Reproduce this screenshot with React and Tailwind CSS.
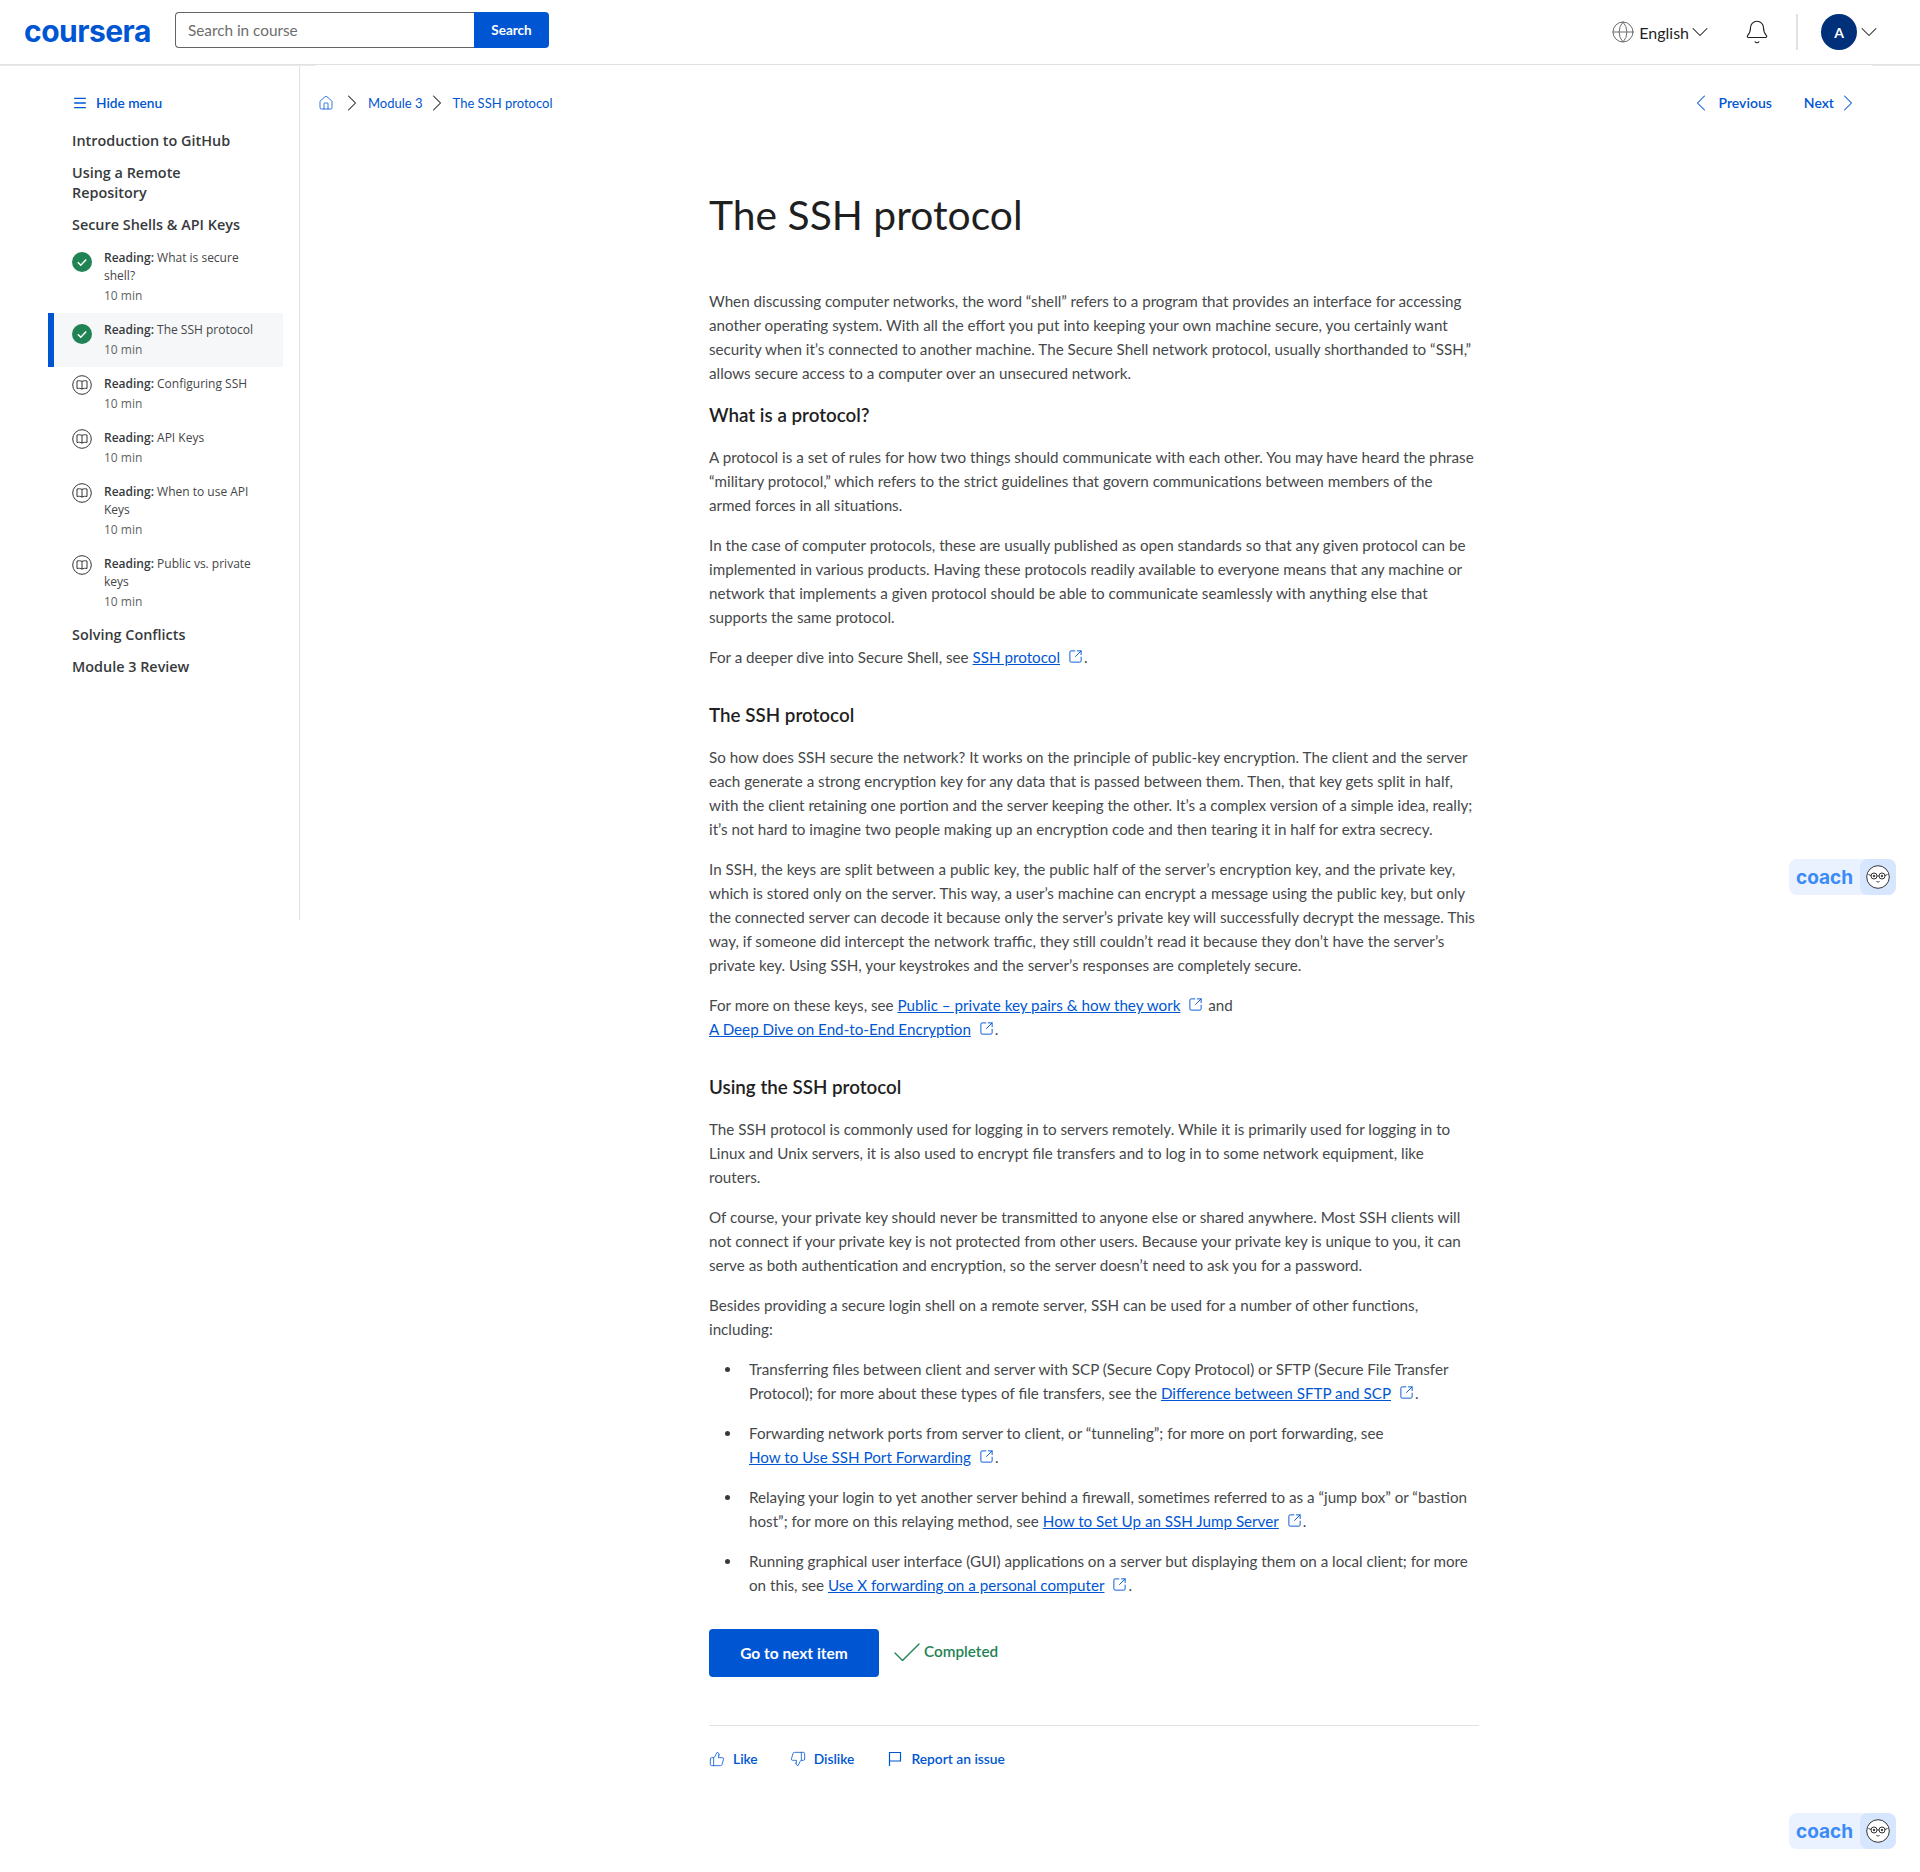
import { Bell, Check, ChevronDown, ChevronLeft, ChevronRight, Globe, House, Menu, SquareArrowOutUpRight, ThumbsDown, ThumbsUp } from "lucide-react";

const body = "font-['Lato','Liberation_Sans',sans-serif]";

function DoneIcon() {
  return (
    <svg width="20" height="20" viewBox="0 0 20 20" className="shrink-0">
      <circle cx="10" cy="10" r="10" fill="#1f8354" />
      <path d="M5.8 10.2l3 3 5.4-5.6" fill="none" stroke="#fff" strokeWidth="1.5" />
    </svg>
  );
}

function BookIcon() {
  return (
    <svg width="20" height="20" viewBox="0 0 20 20" fill="none" stroke="#333" className="shrink-0">
      <circle cx="10" cy="10" r="9.3" />
      <path d="M10 6.4c-1.4-.7-3.300-.8-5-.4v7.500c1.700-.4 3.600-.2 5 .5 1.400-.7 3.300-.9 5-.5V6c-1.700-.4-3.600-.3-5 .4zM10 6.400v8" />
    </svg>
  );
}

function CoachButton({ className }) {
  return (
    <div className={`absolute right-[24px] flex h-[36px] w-[107px] rounded-lg bg-[#eaf2ff] ${className}`}>
      <span className="flex-1 text-center font-['Inter',sans-serif] text-[19px] font-bold leading-[37px] text-[#3b8bf6]">coach</span>
      <span className="flex w-[36px] items-center justify-center rounded-lg bg-[#d6e6ff]">
        <svg width="24" height="24" viewBox="0 0 24 24" fill="none" stroke="#333">
          <circle cx="12" cy="12" r="11.300" fill="#fff" />
          <circle cx="8" cy="11" r="3" />
          <circle cx="16" cy="11" r="3" />
          <path d="M11 11h2M2.500 9.500L5 10.500M21.500 9.500L19 10.500M10.500 16.500c1 .6 2 .6 3 0" />
          <circle cx="8" cy="11" r=".8" fill="#333" />
          <circle cx="16" cy="11" r=".8" fill="#333" />
        </svg>
      </span>
    </div>
  );
}

function Ext({ children }) {
  return (
    <>
      <a className="text-[#0056d2] underline">{children}</a>
      <SquareArrowOutUpRight size={15} strokeWidth={1.5} className="ml-[8px] mr-[1px] inline-block align-[-1px] text-[#0056d2]" />
    </>
  );
}

function Reading({ label, lines = [], done, active }) {
  return (
    <div className={`flex gap-[12px] pr-[8px] ${active ? "h-[54px] border-l-[6px] border-[#0056d2] bg-[#f5f7f8] pl-[18px] pt-[8px]" : "pl-[24px] pt-[8px] pb-[7px]"}`}>
      <div className={done ? "pt-[3px]" : ""}>{done ? <DoneIcon /> : <BookIcon />}</div>
      <div className="font-['Open_Sans',sans-serif] text-[12px] text-[#444648]">
        <div className="leading-[18px] whitespace-nowrap"><b className="font-semibold text-[#373a3c]">Reading:</b> {label}</div>
        {lines.map((l) => <div key={l} className="leading-[18px]">{l}</div>)}
        <div className="mt-[1px] leading-[20px] text-[#636363]">10 min</div>
      </div>
    </div>
  );
}

function Section({ children }) {
  return <div className="px-[24px] py-[6px] font-['Open_Sans',sans-serif] text-[14.400px] font-semibold leading-[20px] text-[#373a3c]">{children}</div>;
}

const P = ({ children, className = "" }) => <p className={`mb-[16px] whitespace-nowrap text-[#46484a] ${className}`}>{children}</p>;
const H = ({ children, className = "" }) => <h2 className={`mb-[15px] text-[18.800px] font-semibold leading-[30px] text-[#1f1f1f] ${className}`}>{children}</h2>;
const Li = ({ children }) => <li className="relative mb-[16px] whitespace-nowrap text-[#46484a] before:absolute before:-left-[24px] before:top-[10px] before:h-[5px] before:w-[5px] before:rounded-full before:bg-[#373a3c]">{children}</li>;

export default function App() {
  return (
    <div className={`relative min-h-[1872px] w-[1920px] overflow-hidden bg-white ${body}`}>
      <header className="flex h-[65px] items-center border-b border-[#e1e1e1] pl-[24px] pr-[38px]">
        <div className="-mt-[3px] w-[151px] font-['Inter',sans-serif] text-[30px] font-bold leading-none tracking-[-0.5px] text-[#0056d2]">coursera</div>
        <div className="-mt-[4px] flex h-[36px]">
          <div className="flex w-[299px] items-center rounded-l border border-r-0 border-[#636363] px-[12px] text-[15.300px] text-[#6d6d6d]">Search in course</div>
          <button className="w-[75px] rounded-r bg-[#0056d2] text-[13.500px] font-bold text-white">Search</button>
        </div>
        <div className="ml-auto flex items-center">
          <Globe size={24} strokeWidth={1} className="text-[#6d6d6d]" />
          <span className="ml-[4px] mt-[1px] text-[16px] text-[#1f1f1f]">English</span>
          <ChevronDown size={28} strokeWidth={0.9} className="-ml-[3px] -mr-[4px] text-[#1f1f1f]" />
          <Bell size={26} strokeWidth={1} className="ml-[34px] text-[#1f1f1f]" />
          <div className="ml-[26px] h-[36px] w-[2px] bg-[#e1e1e1]" />
          <div className="ml-[23px] flex h-[36px] w-[36px] items-center justify-center rounded-full bg-[#00307a] text-[14px] font-bold text-white">A</div>
          <ChevronDown size={28} strokeWidth={0.9} className="-ml-[2px] -mr-[1px] text-[#1f1f1f]" />
        </div>
      </header>
      <div className="flex h-px justify-between">
        <div className="w-[316px] bg-[#e9e9e9]" />
        <div className="w-[48px] bg-[#e9e9e9]" />
      </div>

      <div className="flex">
        <aside className="h-[854px] w-[300px] shrink-0 border-r border-[#e1e1e1] pt-[25px]">
          <div className="flex items-center gap-[8px] pl-[72px] text-[13.700px] font-semibold leading-[24px] text-[#0056d2]">
            <Menu size={16} strokeWidth={2} />
            Hide menu
          </div>
          <div className="mt-[10px] ml-[48px] w-[235px]">
            <Section>Introduction to GitHub</Section>
            <Section>Using a Remote<br />Repository</Section>
            <Section>Secure Shells &amp; API Keys</Section>
            <Reading done label="What is secure" lines={["shell?"]} />
            <Reading done active label="The SSH protocol" />
            <Reading label="Configuring SSH" />
            <Reading label="API Keys" />
            <Reading label="When to use API" lines={["Keys"]} />
            <Reading label="Public vs. private" lines={["keys"]} />
            <Section>Solving Conflicts</Section>
            <Section>Module 3 Review</Section>
          </div>
        </aside>

        <main className="flex-1">
          <div className="mt-[25px] flex h-[24px] items-center pl-[18px] pr-[58px] text-[13px] text-[#0056d2]">
            <House size={16} strokeWidth={1.2} />
            <ChevronRight size={28} strokeWidth={0.9} className="ml-[4px] text-[#1f1f1f]" />
            <span className="ml-[2px] mt-[1px]">Module 3</span>
            <ChevronRight size={28} strokeWidth={0.9} className="ml-0 text-[#1f1f1f]" />
            <span className="ml-[2px] mt-[1px]">The SSH protocol</span>
            <div className="-mt-[1px] ml-auto flex items-center text-[14px] font-semibold">
              <ChevronLeft size={28} strokeWidth={0.9} className="-mr-[5px]" />
              <span className="ml-[9px]">Previous</span>
              <span className="ml-[32px]">Next</span>
              <ChevronRight size={28} strokeWidth={0.9} />
            </div>
          </div>

          <div className="ml-[409px] w-[770px] text-[15.200px] leading-[24px]">
            <h1 className="mt-[76px] mb-[50px] text-[40.800px] font-normal leading-[48px] text-[#1f1f1f]">The SSH protocol</h1>

            <P>When discussing computer networks, the word “shell” refers to a program that provides an interface for accessing<br />another operating system. With all the effort you put into keeping your own machine secure, you certainly want<br />security when it’s connected to another machine. The Secure Shell network protocol, usually shorthanded to “SSH,”<br />allows secure access to a computer over an unsecured network.</P>

            <H className="-mt-[1px]">What is a protocol?</H>
            <P>A protocol is a set of rules for how two things should communicate with each other. You may have heard the phrase<br />“military protocol,” which refers to the strict guidelines that govern communications between members of the<br />armed forces in all situations.</P>
            <P>In the case of computer protocols, these are usually published as open standards so that any given protocol can be<br />implemented in various products. Having these protocols readily available to everyone means that any machine or<br />network that implements a given protocol should be able to communicate seamlessly with anything else that<br />supports the same protocol.</P>
            <P>For a deeper dive into Secure Shell, see <Ext>SSH protocol</Ext>.</P>

            <H className="mt-[31px]">The SSH protocol</H>
            <P>So how does SSH secure the network? It works on the principle of public-key encryption. The client and the server<br />each generate a strong encryption key for any data that is passed between them. Then, that key gets split in half,<br />with the client retaining one portion and the server keeping the other. It’s a complex version of a simple idea, really;<br />it’s not hard to imagine two people making up an encryption code and then tearing it in half for extra secrecy.</P>
            <P>In SSH, the keys are split between a public key, the public half of the server’s encryption key, and the private key,<br />which is stored only on the server. This way, a user’s machine can encrypt a message using the public key, but only<br />the connected server can decode it because only the server’s private key will successfully decrypt the message. This<br />way, if someone did intercept the network traffic, they still couldn’t read it because they don’t have the server’s<br />private key. Using SSH, your keystrokes and the server’s responses are completely secure.</P>
            <P>For more on these keys, see <Ext>Public – private key pairs &amp; how they work</Ext> and<br /><Ext>A Deep Dive on End-to-End Encryption</Ext>.</P>

            <H className="mt-[31px]">Using the SSH protocol</H>
            <P>The SSH protocol is commonly used for logging in to servers remotely. While it is primarily used for logging in to<br />Linux and Unix servers, it is also used to encrypt file transfers and to log in to some network equipment, like<br />routers.</P>
            <P>Of course, your private key should never be transmitted to anyone else or shared anywhere. Most SSH clients will<br />not connect if your private key is not protected from other users. Because your private key is unique to you, it can<br />serve as both authentication and encryption, so the server doesn’t need to ask you for a password.</P>
            <P>Besides providing a secure login shell on a remote server, SSH can be used for a number of other functions,<br />including:</P>
            <ul className="list-none pl-[40px]">
              <Li>Transferring files between client and server with SCP (Secure Copy Protocol) or SFTP (Secure File Transfer<br />Protocol); for more about these types of file transfers, see the <Ext>Difference between SFTP and SCP</Ext>.</Li>
              <Li>Forwarding network ports from server to client, or “tunneling”; for more on port forwarding, see<br /><Ext>How to Use SSH Port Forwarding</Ext>.</Li>
              <Li>Relaying your login to yet another server behind a firewall, sometimes referred to as a “jump box” or “bastion<br />host”; for more on this relaying method, see <Ext>How to Set Up an SSH Jump Server</Ext>.</Li>
              <Li>Running graphical user interface (GUI) applications on a server but displaying them on a local client; for more<br />on this, see <Ext>Use X forwarding on a personal computer</Ext>.</Li>
            </ul>

            <div className="mt-[32px] flex items-center">
              <button className="h-[48px] w-[170px] rounded bg-[#0056d2] text-[15.500px] font-bold text-white">Go to next item</button>
              <Check size={36} strokeWidth={0.9} className="ml-[10px] text-[#1f8354]" />
              <span className="-ml-[1px] -mt-[4px] text-[15.300px] font-semibold text-[#1f8354]">Completed</span>
            </div>

            <div className="mt-[48px] flex h-[66px] items-center border-t border-[#e1e1e1] text-[13.800px] font-semibold text-[#0056d2]">
              <ThumbsUp size={16} strokeWidth={1.2} />
              <span className="ml-[8px]">Like</span>
              <ThumbsDown size={16} strokeWidth={1.2} className="ml-[32px]" />
              <span className="ml-[8px]">Dislike</span>
              <svg width="16" height="16" viewBox="0 0 16 16" fill="none" stroke="#0056d2" strokeWidth="1.2" className="ml-[33px]">
                <path d="M2.500 15V1.500h11v8.500h-11" />
              </svg>
              <span className="ml-[8px]">Report an issue</span>
            </div>
          </div>
        </main>
      </div>

      <CoachButton className="top-[859px]" />
      <CoachButton className="top-[1813px]" />
    </div>
  );
}
